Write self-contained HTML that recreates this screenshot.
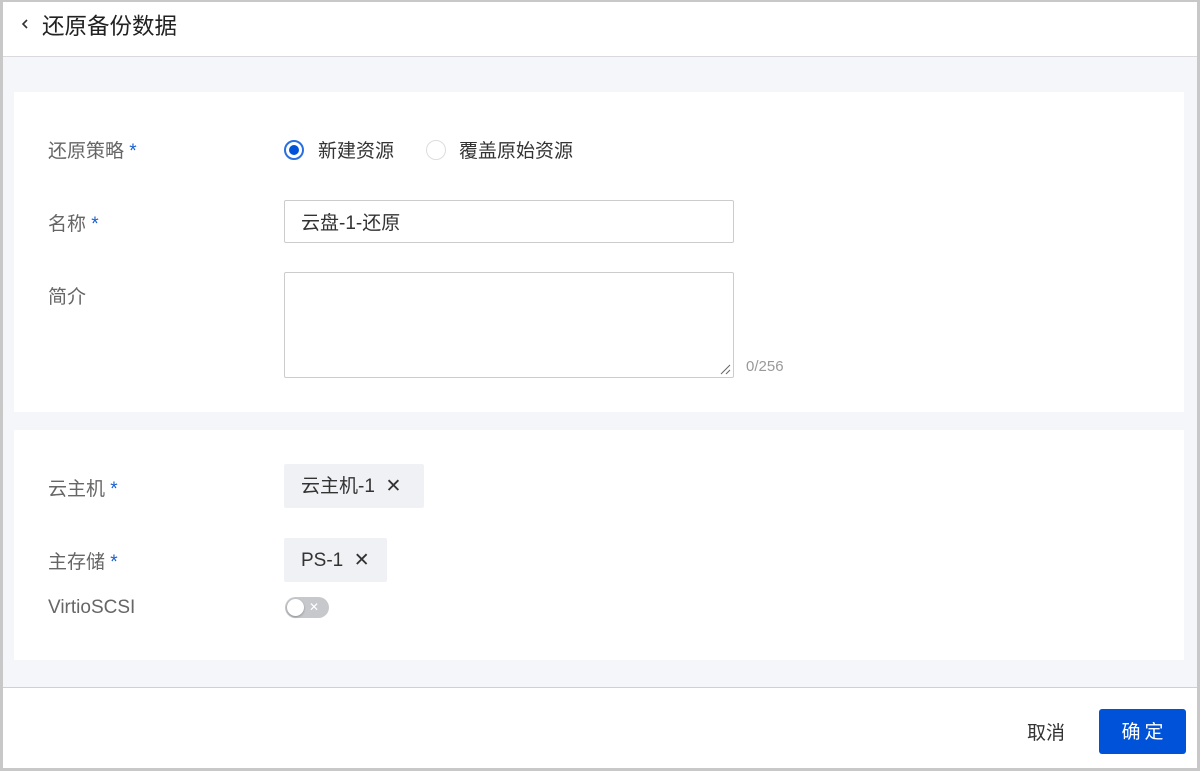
<!DOCTYPE html>
<html><head><meta charset="utf-8"><style>
*{box-sizing:border-box;margin:0;padding:0}
body{width:1200px;height:771px;overflow:hidden;background:#c8c8c8;font-family:"Liberation Sans","Noto Sans CJK SC",sans-serif;position:relative}
.frame{position:absolute;left:3px;top:2px;width:1194px;height:766px;background:#f5f6fa}
.hdr{position:absolute;left:0;top:0;width:1194px;height:55px;background:#fff;border-bottom:1px solid #d9d9de}
.hdr .t{position:absolute;left:39px;top:12px;font-size:22.5px;line-height:26px;color:#222}
.card{position:absolute;left:11px;width:1170px;background:#fff}
.lbl{position:absolute;left:34px;font-size:19px;line-height:20px;color:#666}
.lbl i{font-style:normal;color:#1a5fd0}
.abs{position:absolute}
.radio{position:absolute;width:20px;height:20px;border-radius:50%;border:1px solid #ddd;background:#fff}
.radio.on{border:2px solid #2a6fe0}
.radio.on::after{content:"";position:absolute;left:3px;top:3px;width:10px;height:10px;border-radius:50%;background:#0052d9}
.txt{font-size:19px;line-height:20px;color:#333}
.inp{position:absolute;left:270px;width:450px;border:1px solid #ccc;border-radius:2px;background:#fff}
.tag{position:absolute;left:270px;height:44px;background:#f0f1f4;border-radius:2px;font-size:19px;line-height:20px;color:#333;padding:13px 0 0 17px}
.ftr{position:absolute;left:0;top:685px;width:1194px;height:81px;background:#fff;border-top:1px solid #d0d0d4}
</style></head><body>
<div class="frame">
 <div class="hdr">
  <svg class="abs" style="left:17px;top:15px" width="10" height="14"><path d="M7 3L3 7L7 11" stroke="#333" stroke-width="1.6" fill="none"/></svg>
  <span class="t">还原备份数据</span></div>
 <div class="card" style="top:90px;height:320px">
  <div class="lbl" style="top:50px">还原策略 <i>*</i></div>
  <div class="radio on" style="left:270px;top:48px"></div>
  <div class="abs txt" style="left:304px;top:50px">新建资源</div>
  <div class="radio" style="left:412px;top:48px"></div>
  <div class="abs txt" style="left:445px;top:50px">覆盖原始资源</div>
  <div class="lbl" style="top:123px">名称 <i>*</i></div>
  <div class="inp" style="top:108px;height:43px"><span class="txt abs" style="left:16px;top:13px">云盘-1-还原</span></div>
  <div class="lbl" style="top:196px">简介</div>
  <div class="inp" style="top:180px;height:106px">
   <svg class="abs" style="right:2px;bottom:2px" width="12" height="12"><path d="M11 2L2 11M11 7L7 11" stroke="#666" stroke-width="1"/></svg>
  </div>
  <div class="abs" style="left:732px;top:267px;font-size:15px;line-height:16px;color:#999">0/256</div>
 </div>
 <div class="card" style="top:428px;height:230px">
  <div class="lbl" style="top:50px">云主机 <i>*</i></div>
  <div class="tag" style="top:34px;width:140px">云主机-1 &nbsp;✕</div>
  <div class="lbl" style="top:123px">主存储 <i>*</i></div>
  <div class="tag" style="top:108px;width:103px">PS-1 &nbsp;✕</div>
  <div class="lbl" style="top:168px">VirtioSCSI</div>
  <div class="abs" style="left:271px;top:167px;width:44px;height:21px;border-radius:11px;background:#c6c8cc">
   <div class="abs" style="left:2px;top:2px;width:17px;height:17px;border-radius:50%;background:#fff;box-shadow:0 1px 2px rgba(0,0,0,.3)"></div>
   <span class="abs" style="left:24px;top:4px;font-size:12px;line-height:13px;color:#fff">✕</span>
  </div>
 </div>
 <div class="ftr">
  <div class="abs" style="left:1024px;top:36px;font-size:19px;line-height:20px;color:#333">取消</div>
  <div class="abs" style="left:1096px;top:21px;width:87px;height:45px;background:#0052d9;border-radius:3px;color:#fff;font-size:19px;text-align:center;line-height:47px;letter-spacing:4px;padding-left:4px">确定</div>
 </div>
</div>
</body></html>
